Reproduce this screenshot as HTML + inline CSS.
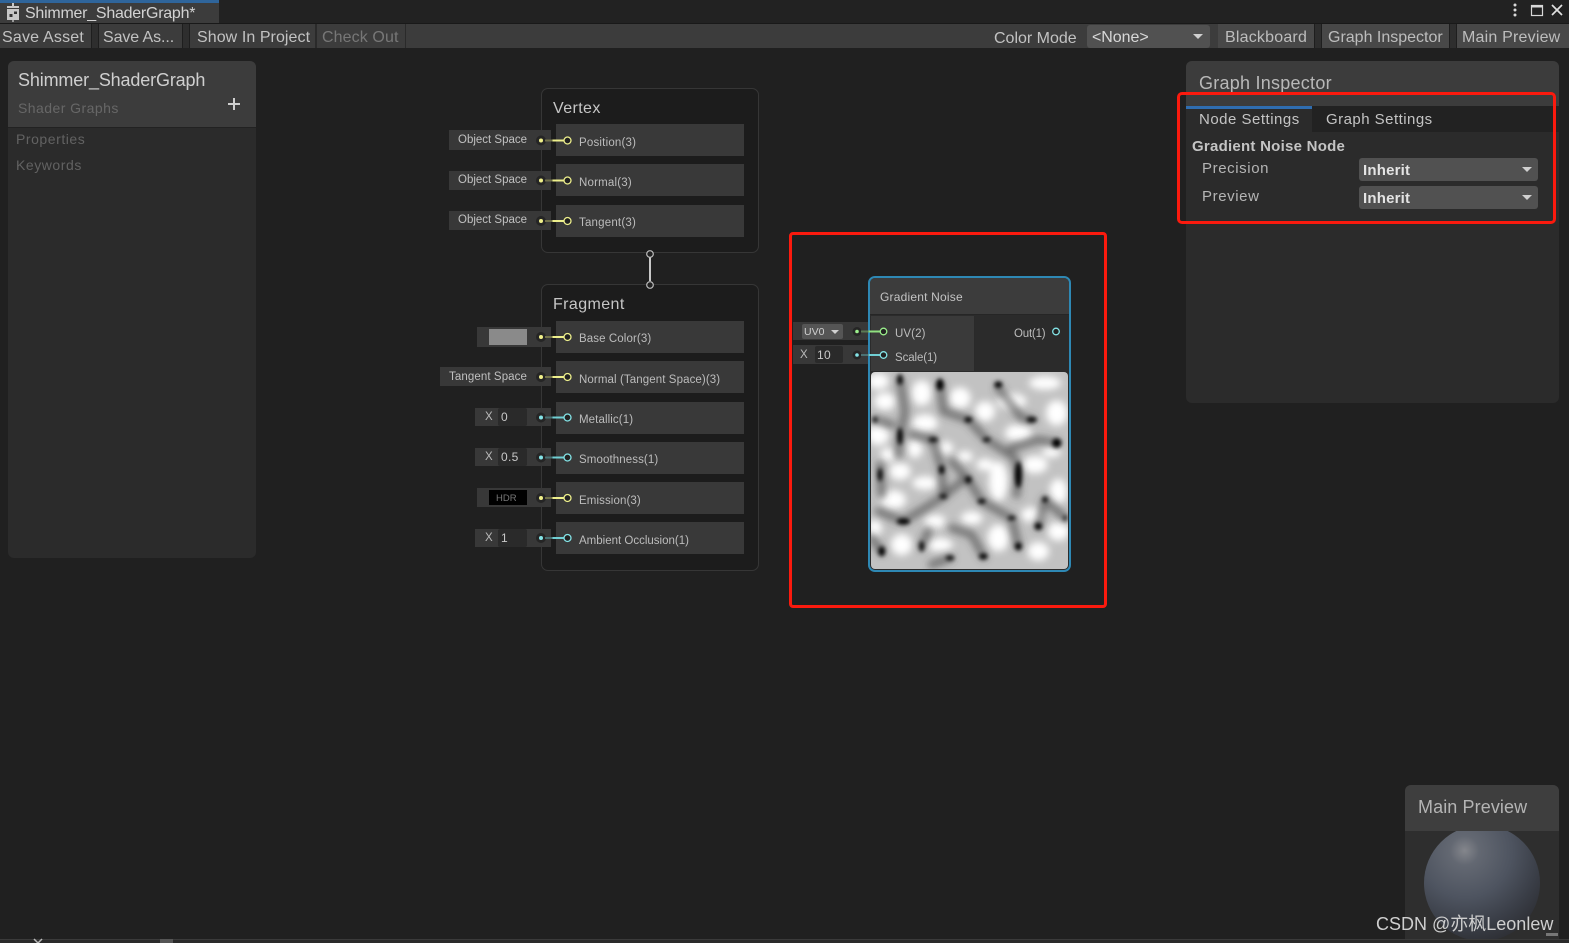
<!DOCTYPE html>
<html><head><meta charset="utf-8"><style>
html,body{margin:0;padding:0;width:1569px;height:943px;overflow:hidden;background:#202020}
body{position:relative;font-family:"Liberation Sans","Noto Sans CJK SC",sans-serif;color:#c4c4c4}
div,span.a{position:absolute;box-sizing:border-box}
.t{position:absolute;white-space:nowrap;line-height:1}
.tb{top:24px;height:24px;background:#3c3c3c;border-right:1px solid #222}
.gap{top:24px;height:24px;background:#2e2e2e;border-left:1px solid #1e1e1e;border-right:1px solid #1e1e1e}
.bt{font-size:16px;letter-spacing:.2px;color:#c2c2c2;top:30px}
.row{left:556px;width:188px;height:32px;background:#393939}
.lbl{height:20px;background:#383838}
.pl{left:579px;font-size:11.5px;letter-spacing:.1px;color:#bcbcbc}
.ol{font-size:11.5px;letter-spacing:0;color:#c0c0c0}
.fld{background:#2a2a2a;border-radius:2px;height:18px;width:29px}
.x{font-size:11.5px;color:#bbb}
.v{font-size:12px;color:#c8c8c8;letter-spacing:.3px}
.sel{background:#515151;border-radius:3px;height:23px;left:1359px;width:179px}
.sel b{position:absolute;left:4px;top:5px;font-size:15px;color:#e4e4e4;font-weight:bold;line-height:1;letter-spacing:.2px}
.tri{position:absolute;width:0;height:0;border-left:5px solid transparent;border-right:5px solid transparent;border-top:5px solid #d0d0d0}
</style></head><body>

<!-- top bar -->
<div style="left:0;top:0;width:1569px;height:23px;background:#222"></div>
<div style="left:0;top:0;width:219px;height:23px;background:#3c3c3c"></div>
<div style="left:0;top:0;width:219px;height:3px;background:#2f659b"></div>
<svg style="position:absolute;left:5px;top:3px" width="16" height="19" viewBox="0 0 16 19"><rect x="7" y="0" width="2" height="3" fill="#c8c8c8"/><rect x="2" y="3" width="12" height="2" fill="#c8c8c8"/><rect x="2" y="6" width="12" height="11" fill="#c8c8c8"/><rect x="4.500" y="11" width="3" height="3" fill="#333"/><rect x="9" y="8.500" width="3" height="2.500" fill="#333"/><rect x="7" y="17" width="2" height="2" fill="#999"/></svg>
<span class="t" style="left:25px;top:6px;font-size:16px;letter-spacing:-.25px;color:#d2d2d2">Shimmer_ShaderGraph*</span>
<svg style="position:absolute;left:1509px;top:2px" width="56" height="17" viewBox="0 0 56 17"><circle cx="6" cy="3" r="1.500" fill="#d8d8d8"/><circle cx="6" cy="8" r="1.500" fill="#d8d8d8"/><circle cx="6" cy="13" r="1.500" fill="#d8d8d8"/><rect x="22.500" y="3.500" width="11" height="10" fill="none" stroke="#d8d8d8" stroke-width="1.200"/><rect x="22" y="3" width="12" height="2.500" fill="#d8d8d8"/><path d="M43 3L53 13M53 3L43 13" stroke="#e0e0e0" stroke-width="1.700" fill="none"/></svg>

<!-- toolbar -->
<div style="left:0;top:23px;width:1569px;height:1px;background:#191919"></div>
<div style="left:0;top:24px;width:1569px;height:24px;background:#3c3c3c"></div>
<div class="gap" style="left:91px;width:8px"></div>
<div class="gap" style="left:182px;width:8px"></div>
<div style="left:315px;top:24px;width:2px;height:24px;background:#2a2a2a"></div>
<div style="left:405px;top:24px;width:1px;height:24px;background:#2a2a2a"></div>
<div class="tb" style="left:1218px;width:96px;background:#484848;border:0"></div>
<div class="gap" style="left:1314px;width:8px"></div>
<div class="tb" style="left:1322px;width:127px;background:#484848;border:0"></div>
<div class="gap" style="left:1449px;width:8px"></div>
<div class="tb" style="left:1457px;width:112px;background:#484848;border:0"></div>
<span class="t bt" style="left:2px">Save Asset</span>
<span class="t bt" style="left:103px;letter-spacing:-.1px">Save As...</span>
<span class="t bt" style="left:197px;letter-spacing:.07px">Show In Project</span>
<span class="t bt" style="left:322px;color:#777;letter-spacing:.1px">Check Out</span>
<span class="t bt" style="left:994px;top:31px;letter-spacing:0">Color Mode</span>
<div style="left:1087px;top:25px;width:123px;height:23px;background:#515151;border-radius:3px"></div>
<span class="t bt" style="left:1092px;color:#d8d8d8;letter-spacing:-.05px">&lt;None&gt;</span>
<span class="tri" style="left:1193px;top:34px"></span>
<span class="t bt" style="left:1225px;color:#bdbdbd">Blackboard</span>
<span class="t bt" style="left:1328px;color:#bdbdbd;letter-spacing:0">Graph Inspector</span>
<span class="t bt" style="left:1462px;color:#bdbdbd">Main Preview</span>

<!-- blackboard -->
<div style="left:8px;top:61px;width:248px;height:497px;background:#2b2b2b;border-radius:6px;overflow:hidden">
 <div style="left:0;top:0;width:248px;height:67px;background:#3c3c3c;border-bottom:1px solid #222"></div>
</div>
<span class="t" style="left:18px;top:71px;font-size:18px;letter-spacing:-.15px;color:#cfcfcf">Shimmer_ShaderGraph</span>
<span class="t" style="left:18px;top:101px;font-size:14px;letter-spacing:.45px;color:#676767">Shader Graphs</span>
<svg style="position:absolute;left:227px;top:97px" width="14" height="14"><path d="M7 1V13M1 7H13" stroke="#cfcfcf" stroke-width="2"/></svg>
<span class="t" style="left:16px;top:132px;font-size:14px;letter-spacing:.55px;color:#626262">Properties</span>
<span class="t" style="left:16px;top:158px;font-size:14px;letter-spacing:.55px;color:#626262">Keywords</span>

<!-- Vertex -->
<div style="left:541px;top:88px;width:218px;height:165px;background:#1c1c1c;border:1px solid #363636;border-radius:7px"></div>
<span class="t" style="left:553px;top:101px;font-size:16px;letter-spacing:.4px;color:#c6c6c6">Vertex</span>
<div class="row" style="top:124px"></div><div class="row" style="top:164px"></div><div class="row" style="top:205px"></div>
<!-- Fragment -->
<div style="left:541px;top:284px;width:218px;height:287px;background:#1c1c1c;border:1px solid #363636;border-radius:7px"></div>
<span class="t" style="left:553px;top:297px;font-size:16px;letter-spacing:.4px;color:#c6c6c6">Fragment</span>
<div class="row" style="top:321px"></div><div class="row" style="top:361px"></div><div class="row" style="top:402px"></div><div class="row" style="top:442px"></div><div class="row" style="top:482px"></div><div class="row" style="top:522px"></div>

<!-- left label boxes -->
<div class="lbl" style="left:449px;top:130px;width:102px"></div>
<div class="lbl" style="left:449px;top:171px;width:102px;height:19px"></div>
<div class="lbl" style="left:449px;top:211px;width:102px;height:19px"></div>
<div class="lbl" style="left:477px;top:327px;width:74px"></div>
<div class="lbl" style="left:440px;top:367px;width:111px;height:19px"></div>
<div class="lbl" style="left:475px;top:408px;width:76px;height:18px"></div>
<div class="lbl" style="left:475px;top:448px;width:76px;height:18px"></div>
<div class="lbl" style="left:477px;top:488px;width:74px;height:19px"></div>
<div class="lbl" style="left:475px;top:529px;width:76px;height:18px"></div>
<span class="t ol" style="left:458px;top:135px">Object Space</span>
<span class="t ol" style="left:458px;top:175px">Object Space</span>
<span class="t ol" style="left:458px;top:215px">Object Space</span>
<span class="t ol" style="left:449px;top:372px;letter-spacing:.1px">Tangent Space</span>
<div style="left:489px;top:329px;width:38px;height:16px;background:#8a8a8a"></div>
<div class="fld" style="left:498px;top:408px"></div>
<div class="fld" style="left:498px;top:448px"></div>
<div class="fld" style="left:498px;top:529px"></div>
<div style="left:489px;top:490px;width:38px;height:15px;background:#000"></div>
<span class="t" style="left:496px;top:494px;font-size:9.5px;color:#777">HDR</span>
<span class="t x" style="left:485px;top:412px">X</span><span class="t v" style="left:501px;top:411px">0</span>
<span class="t x" style="left:485px;top:452px">X</span><span class="t v" style="left:501px;top:451px">0.5</span>
<span class="t x" style="left:485px;top:533px">X</span><span class="t v" style="left:501px;top:532px">1</span>

<span class="t pl" style="top:138px;letter-spacing:.2px">Position(3)</span>
<span class="t pl" style="top:178px;letter-spacing:.2px">Normal(3)</span>
<span class="t pl" style="top:218px;letter-spacing:.2px">Tangent(3)</span>
<span class="t pl" style="top:334px">Base Color(3)</span>
<span class="t pl" style="top:375px">Normal (Tangent Space)(3)</span>
<span class="t pl" style="top:415px">Metallic(1)</span>
<span class="t pl" style="top:455px">Smoothness(1)</span>
<span class="t pl" style="top:496px">Emission(3)</span>
<span class="t pl" style="top:536px;letter-spacing:0">Ambient Occlusion(1)</span>

<svg style="position:absolute;left:0;top:0" width="1569" height="943">
<defs>
<g id="py"><circle cx="541" cy="0" r="5" fill="#252525"/><circle cx="541" cy="0" r="2" fill="#f0f08a"/><path d="M545 0H552.500" stroke="#70704a" stroke-width="2"/><path d="M552.500 0H564.500" stroke="#eef08c" stroke-width="2"/><circle cx="567.500" cy="0" r="3.500" fill="#222" stroke="#eef08c" stroke-width="1.300"/></g>
<g id="pc"><circle cx="541" cy="0" r="5" fill="#252525"/><circle cx="541" cy="0" r="2" fill="#84e4e7"/><path d="M545 0H552.500" stroke="#4a7072" stroke-width="2"/><path d="M552.500 0H564.500" stroke="#70cfd4" stroke-width="2"/><circle cx="567.500" cy="0" r="3.500" fill="#222" stroke="#84e4e7" stroke-width="1.300"/></g>
</defs>
<use href="#py" y="140.500"/><use href="#py" y="180.500"/><use href="#py" y="221"/>
<use href="#py" y="337"/><use href="#py" y="377"/><use href="#pc" y="417.500"/><use href="#pc" y="457.500"/><use href="#py" y="498"/><use href="#pc" y="538"/>
<path d="M650 257V281" stroke="#c8c8c8" stroke-width="2"/>
<circle cx="650" cy="254" r="3.300" fill="#222" stroke="#bbb" stroke-width="1.200"/>
<circle cx="650" cy="285" r="3.300" fill="#222" stroke="#bbb" stroke-width="1.200"/>
</svg>

<!-- Gradient Noise node -->
<div class="lbl" style="left:793px;top:322px;width:77px;height:18px"></div>
<div class="lbl" style="left:793px;top:345px;width:77px;height:19px"></div>
<div style="left:802px;top:324px;width:41px;height:15px;background:#555;border-radius:2px"></div>
<span class="t" style="left:804px;top:327px;font-size:10.500px;color:#d0d0d0">UV0</span>
<span class="tri" style="left:831px;top:330px;border-left-width:4px;border-right-width:4px;border-top-width:4px"></span>
<span class="t x" style="left:800px;top:350px">X</span>
<div class="fld" style="left:815px;top:346px;height:17px;width:28px"></div>
<span class="t v" style="left:817px;top:349px">10</span>

<div style="left:868px;top:276px;width:203px;height:296px;background:#2b2b2b;border:2px solid #2e88b4;border-radius:7px"></div>
<div style="left:870px;top:278px;width:199px;height:37px;background:#3c3c3c;border-bottom:1px solid #262626;border-radius:5px 5px 0 0"></div>
<div style="left:871px;top:316px;width:104px;height:55px;background:#3a3a3a;border-right:1px solid #2a2a2a"></div>
<div style="left:975px;top:316px;width:94px;height:55px;background:#2b2b2b"></div>
<span class="t" style="left:880px;top:291px;font-size:12px;letter-spacing:.2px;color:#c4c4c4">Gradient Noise</span>
<span class="t pl" style="left:895px;top:329px">UV(2)</span>
<span class="t pl" style="left:895px;top:353px;letter-spacing:-.1px">Scale(1)</span>
<span class="t pl" style="left:1014px;top:329px;letter-spacing:-.2px">Out(1)</span>

<svg style="position:absolute;left:0;top:0" width="1569" height="943">
<circle cx="857" cy="331.500" r="4.500" fill="#252525"/><circle cx="857" cy="331.500" r="1.800" fill="#9bef8c"/>
<path d="M861 331.500H868.500" stroke="#5b7a54" stroke-width="2"/><path d="M868.500 331.500H880" stroke="#8fe07f" stroke-width="2"/>
<circle cx="883.500" cy="331.500" r="3.300" fill="#222" stroke="#9bef8c" stroke-width="1.300"/>
<circle cx="857" cy="355" r="4.500" fill="#252525"/><circle cx="857" cy="355" r="1.800" fill="#84e4e7"/>
<path d="M861 355H868.500" stroke="#4a7072" stroke-width="2"/><path d="M868.500 355H880" stroke="#70cfd4" stroke-width="2"/>
<circle cx="883.500" cy="355" r="3.300" fill="#222" stroke="#84e4e7" stroke-width="1.300"/>
<circle cx="1056" cy="331.500" r="3.300" fill="#222" stroke="#84e4e7" stroke-width="1.300"/>
</svg>

<!-- noise preview -->
<svg style="position:absolute;left:871px;top:372px" width="197" height="197" viewBox="18 12 591 591">
<defs>
<filter id="b1" x="-30%" y="-30%" width="160%" height="160%"><feGaussianBlur stdDeviation="11"/></filter>
<filter id="b2" x="-50%" y="-50%" width="200%" height="200%"><feGaussianBlur stdDeviation="6"/></filter>
<filter id="b3" x="-10%" y="-10%" width="120%" height="120%"><feGaussianBlur stdDeviation="11"/></filter>
<clipPath id="cp"><rect x="18" y="12" width="591" height="591" rx="12"/></clipPath>
</defs>
<g clip-path="url(#cp)">
<rect x="0" y="0" width="640" height="640" fill="#c2c2c2"/>
<g filter="url(#b1)" fill="#fff">
<ellipse cx="40" cy="40" rx="32" ry="24"/><ellipse cx="170" cy="75" rx="30" ry="38"/><ellipse cx="285" cy="90" rx="32" ry="32"/><ellipse cx="440" cy="100" rx="44" ry="24"/><ellipse cx="540" cy="45" rx="48" ry="20"/><ellipse cx="575" cy="135" rx="32" ry="38"/><ellipse cx="40" cy="200" rx="32" ry="32"/><ellipse cx="60" cy="100" rx="32" ry="26"/><ellipse cx="180" cy="165" rx="38" ry="26"/><ellipse cx="460" cy="195" rx="40" ry="26"/><ellipse cx="360" cy="130" rx="30" ry="30"/><ellipse cx="400" cy="340" rx="28" ry="60"/><ellipse cx="105" cy="310" rx="32" ry="26"/><ellipse cx="180" cy="345" rx="38" ry="20"/><ellipse cx="85" cy="395" rx="38" ry="28"/><ellipse cx="510" cy="290" rx="38" ry="26"/><ellipse cx="580" cy="370" rx="26" ry="38"/><ellipse cx="580" cy="490" rx="32" ry="28"/><ellipse cx="520" cy="550" rx="32" ry="28"/><ellipse cx="400" cy="510" rx="32" ry="40"/><ellipse cx="110" cy="530" rx="32" ry="32"/><ellipse cx="210" cy="460" rx="32" ry="20"/><ellipse cx="320" cy="450" rx="32" ry="20"/><ellipse cx="225" cy="530" rx="38" ry="20"/><ellipse cx="360" cy="290" rx="26" ry="18"/><ellipse cx="300" cy="265" rx="24" ry="16"/><ellipse cx="240" cy="240" rx="24" ry="20"/><ellipse cx="70" cy="260" rx="24" ry="20"/><ellipse cx="500" cy="440" rx="32" ry="22"/><ellipse cx="30" cy="480" rx="20" ry="26"/><ellipse cx="150" cy="240" rx="22" ry="30"/><ellipse cx="560" cy="250" rx="28" ry="18"/>
</g>
<g filter="url(#b3)" fill="none" stroke="#404040" stroke-width="24" stroke-opacity=".6" stroke-linecap="round" stroke-linejoin="round">
<path d="M105 35L120 130L105 205L100 260"/>
<path d="M225 50L235 130L310 155L365 215L420 250L450 270L460 320L455 380"/>
<path d="M30 155L80 170"/>
<path d="M205 215L230 305L235 385L180 420L115 460L40 430"/>
<path d="M500 155L470 150L400 60"/>
<path d="M575 225L520 215L440 240"/>
<path d="M45 290L50 380"/>
<path d="M310 335L350 400L440 450L460 535"/>
<path d="M170 535L190 490"/>
<path d="M260 480L320 500L355 565"/>
<path d="M235 385L290 340"/>
<path d="M520 475L540 395L600 450"/>
<path d="M50 550L20 510M255 570L200 590"/>
<path d="M205 215L140 200M310 335L260 280"/>
</g>
<g filter="url(#b2)" fill="#000">
<ellipse cx="105" cy="35" rx="8" ry="16"/><ellipse cx="225" cy="50" rx="11" ry="18"/><ellipse cx="400" cy="50" rx="12" ry="10"/><ellipse cx="105" cy="205" rx="8" ry="26"/><ellipse cx="30" cy="155" rx="7" ry="8"/><ellipse cx="310" cy="155" rx="12" ry="8"/><ellipse cx="500" cy="155" rx="16" ry="8"/><ellipse cx="575" cy="225" rx="14" ry="14"/><ellipse cx="205" cy="215" rx="14" ry="6"/><ellipse cx="365" cy="215" rx="12" ry="6"/><ellipse cx="460" cy="320" rx="10" ry="40"/><ellipse cx="45" cy="320" rx="7" ry="20"/><ellipse cx="230" cy="305" rx="8" ry="14"/><ellipse cx="310" cy="335" rx="9" ry="10"/><ellipse cx="235" cy="385" rx="11" ry="6"/><ellipse cx="350" cy="400" rx="12" ry="7"/><ellipse cx="540" cy="395" rx="8" ry="9"/><ellipse cx="115" cy="460" rx="20" ry="9"/><ellipse cx="440" cy="450" rx="12" ry="6"/><ellipse cx="520" cy="475" rx="11" ry="11"/><ellipse cx="600" cy="450" rx="5" ry="8"/><ellipse cx="460" cy="535" rx="10" ry="12"/><ellipse cx="170" cy="535" rx="7" ry="16"/><ellipse cx="50" cy="550" rx="10" ry="15"/><ellipse cx="255" cy="570" rx="13" ry="7"/><ellipse cx="355" cy="565" rx="13" ry="9"/>
</g>
</g>
</svg>

<!-- Graph Inspector -->
<div style="left:1186px;top:61px;width:373px;height:342px;background:#2b2b2b;border-radius:6px;overflow:hidden">
 <div style="left:0;top:0;width:373px;height:45px;background:#3c3c3c"></div>
 <div style="left:0;top:45px;width:373px;height:26px;background:#222"></div>
 <div style="left:0;top:45px;width:126px;height:26px;background:#2b2b2b;border-top:3px solid #2f6db0"></div>
</div>
<span class="t" style="left:1199px;top:74px;font-size:18px;letter-spacing:.25px;color:#b8b8b8">Graph Inspector</span>
<span class="t" style="left:1199px;top:112px;font-size:15px;letter-spacing:.5px;color:#c4c4c4">Node Settings</span>
<span class="t" style="left:1326px;top:112px;font-size:15px;letter-spacing:.47px;color:#c4c4c4">Graph Settings</span>
<span class="t" style="left:1192px;top:139px;font-size:15px;font-weight:bold;letter-spacing:.25px;color:#c4c4c4">Gradient Noise Node</span>
<span class="t" style="left:1202px;top:161px;font-size:15px;letter-spacing:.6px;color:#b4b4b4">Precision</span>
<span class="t" style="left:1202px;top:189px;font-size:15px;letter-spacing:.6px;color:#b4b4b4">Preview</span>
<div class="sel" style="top:158px"><b>Inherit</b><span class="tri" style="left:163px;top:9px"></span></div>
<div class="sel" style="top:186px"><b>Inherit</b><span class="tri" style="left:163px;top:9px"></span></div>

<!-- Main Preview -->
<div style="left:1405px;top:785px;width:154px;height:154px;background:#2e2e2e;border-radius:6px 6px 0 0;overflow:hidden">
 <div style="left:0;top:0;width:154px;height:46px;background:#3e3e3e"></div>
 <svg style="position:absolute;left:0;top:46px" width="154" height="108"><defs>
 <radialGradient id="sp" cx="0.35" cy="0.22" r="0.9"><stop offset="0" stop-color="#84868c"/><stop offset=".14" stop-color="#636872"/><stop offset=".45" stop-color="#4e5460"/><stop offset=".72" stop-color="#3a3e47"/><stop offset=".95" stop-color="#2c2d32"/></radialGradient></defs>
 <circle cx="77" cy="52" r="58" fill="url(#sp)"/></svg>
 <div style="left:141px;top:148px;width:12px;height:3px;background:#777"></div>
</div>
<span class="t" style="left:1418px;top:798px;font-size:18px;letter-spacing:.1px;color:#b4b4b4">Main Preview</span>
<span class="t" style="left:1376px;top:915px;font-size:18px;color:#cfcfcf;letter-spacing:0">CSDN @亦枫Leonlew</span>

<!-- bottom bar -->
<div style="left:0;top:939px;width:1569px;height:1px;background:#3a3a3a"></div>
<div style="left:0;top:940px;width:1569px;height:3px;background:#2a2a2a"></div>
<div style="left:160px;top:939px;width:13px;height:4px;background:#555"></div>
<svg style="position:absolute;left:33px;top:937px" width="10" height="6"><path d="M1 2L5 6L9 2" stroke="#bbb" stroke-width="1.500" fill="none"/></svg>

<!-- red annotation boxes -->
<div style="left:1177px;top:92px;width:379px;height:132px;border:3.500px solid #fb1a0e;border-radius:5px"></div>
<div style="left:789px;top:232px;width:318px;height:376px;border:3.500px solid #fb1a0e;border-radius:4px"></div>
</body></html>
